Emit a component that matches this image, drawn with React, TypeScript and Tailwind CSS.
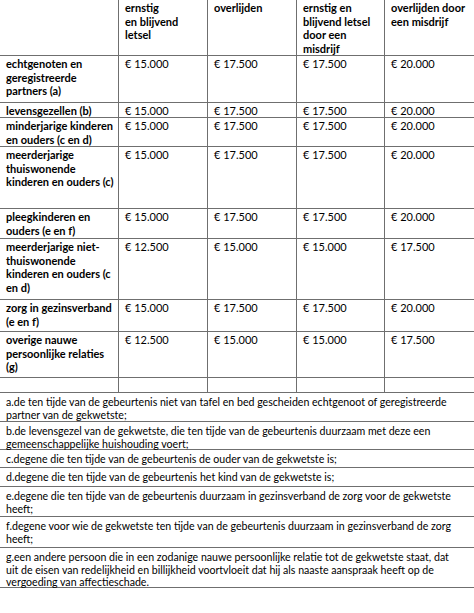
import React from 'react';

const cols = 'grid grid-cols-[119px_89px_89px_88px_1fr]';

type Row = {
  label: string[];
  values: string[];
  h: string;
};

const rows: Row[] = [
  { label: ['echtgenoten en', 'geregistreerde', 'partners (a)'], values: ['€ 15.000', '€ 17.500', '€ 17.500', '€ 20.000'], h: 'h-[47px]' },
  { label: ['levensgezellen (b)'], values: ['€ 15.000', '€ 17.500', '€ 17.500', '€ 20.000'], h: 'h-[15px]' },
  { label: ['minderjarige kinderen', 'en ouders (c en d)'], values: ['€ 15.000', '€ 17.500', '€ 17.500', '€ 20.000'], h: 'h-[29px]' },
  { label: ['meerderjarige', 'thuiswonende', 'kinderen en ouders (c)'], values: ['€ 15.000', '€ 17.500', '€ 17.500', '€ 20.000'], h: 'h-[62px]' },
  { label: ['pleegkinderen en', 'ouders (e en f)'], values: ['€ 15.000', '€ 17.500', '€ 17.500', '€ 20.000'], h: 'h-[30px]' },
  { label: ['meerderjarige niet-', 'thuiswonende', 'kinderen en ouders (c', 'en d)'], values: ['€ 12.500', '€ 15.000', '€ 15.000', '€ 17.500'], h: 'h-[61px]' },
  { label: ['zorg in gezinsverband', '(e en f)'], values: ['€ 15.000', '€ 17.500', '€ 17.500', '€ 20.000'], h: 'h-[32px]' },
  { label: ['overige nauwe', 'persoonlijke relaties', '(g)'], values: ['€ 12.500', '€ 15.000', '€ 15.000', '€ 17.500'], h: 'h-[46px]' },
];

const headers: string[][] = [
  ['ernstig', 'en blijvend', 'letsel'],
  ['overlijden'],
  ['ernstig en', 'blijvend letsel', 'door een', 'misdrijf'],
  ['overlijden door', 'een misdrijf'],
];

const notes: { lines: string[]; h: string }[] = [
  { lines: ['a.de ten tijde van de gebeurtenis niet van tafel en bed gescheiden echtgenoot of geregistreerde', 'partner van de gekwetste;'], h: 'h-[29px]' },
  { lines: ['b.de levensgezel van de gekwetste, die ten tijde van de gebeurtenis duurzaam met deze een', 'gemeenschappelijke huishouding voert;'], h: 'h-[28px]' },
  { lines: ['c.degene die ten tijde van de gebeurtenis de ouder van de gekwetste is;'], h: 'h-[18px]' },
  { lines: ['d.degene die ten tijde van de gebeurtenis het kind van de gekwetste is;'], h: 'h-[19px]' },
  { lines: ['e.degene die ten tijde van de gebeurtenis duurzaam in gezinsverband de zorg voor de gekwetste', 'heeft;'], h: 'h-[30px]' },
  { lines: ['f.degene voor wie de gekwetste ten tijde van de gebeurtenis duurzaam in gezinsverband de zorg', 'heeft;'], h: 'h-[31px]' },
  { lines: ['g.een andere persoon die in een zodanige nauwe persoonlijke relatie tot de gekwetste staat, dat', 'uit de eisen van redelijkheid en billijkheid voortvloeit dat hij als naaste aanspraak heeft op de', 'vergoeding van affectieschade.'], h: 'h-[40px]' },
];

function Lines({ lines }: { lines: string[] }) {
  return (
    <>
      {lines.map((l, i) => (
        <div key={i} className="whitespace-nowrap">{l}</div>
      ))}
    </>
  );
}

export default function App() {
  return (
    <div className="w-[474px] h-[613px] bg-white text-black font-['Lato','Noto_Sans',sans-serif] overflow-hidden">
      {/* header */}
      <div className={`${cols} h-[56px] border-b border-[#6f6f6f] text-[11px] leading-[13.6px] font-bold`}>
        <div className="border-r border-[#6f6f6f]" />
        {headers.map((h, i) => (
          <div key={i} className={`pl-[6px] pt-[1px] ${i < 3 ? 'border-r border-[#6f6f6f]' : ''}`}>
            <Lines lines={h} />
          </div>
        ))}
      </div>

      {/* body rows */}
      {rows.map((r, ri) => (
        <div key={ri} className={`${cols} ${r.h} border-b border-[#6f6f6f] text-[11px] leading-[13.6px]`}>
          <div className="pl-[6px] pt-[1px] border-r border-[#6f6f6f] font-bold">
            <Lines lines={r.label} />
          </div>
          {r.values.map((v, i) => (
            <div key={i} className={`pl-[6px] pt-[1px] ${i < 3 ? 'border-r border-[#6f6f6f]' : ''}`}>
              {v}
            </div>
          ))}
        </div>
      ))}

      {/* empty row */}
      <div className={`${cols} h-[15px] border-b border-[#6f6f6f]`}>
        <div className="border-r border-[#6f6f6f]" />
        <div className="border-r border-[#6f6f6f]" />
        <div className="border-r border-[#6f6f6f]" />
        <div className="border-r border-[#6f6f6f]" />
        <div />
      </div>

      {/* footnotes */}
      {notes.map((n, i) => (
        <div key={i} className={`${n.h} border-b border-[#6f6f6f] pl-[6px] pt-[3px] text-[10.6px] leading-[12.5px]`}>
          <Lines lines={n.lines} />
        </div>
      ))}
    </div>
  );
}
